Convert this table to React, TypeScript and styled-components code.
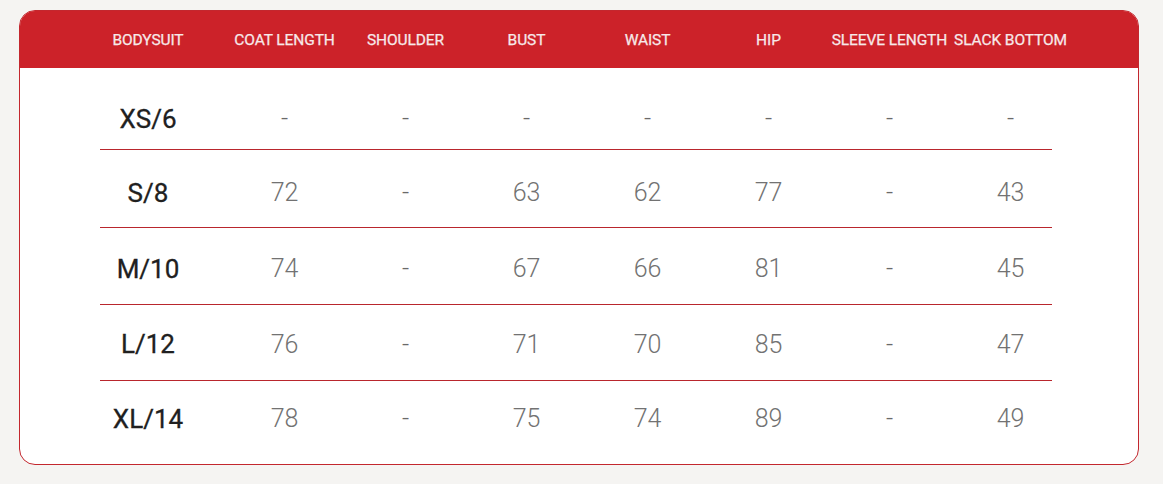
import React from "react";
import styled, { createGlobalStyle } from "styled-components";

const GlobalStyle = createGlobalStyle`
  html, body {
    margin: 0;
    padding: 0;
    background: #f5f4f2;
  }
  body {
    font-family: Roboto, "Liberation Sans", sans-serif;
  }
`;

const Page = styled.div`
  width: 1163px;
  height: 484px;
  padding: 10px 0 0 19px;
  box-sizing: border-box;
`;

const Card = styled.div`
  width: 1120px;
  height: 455px;
  box-sizing: border-box;
  border: 1px solid #c3272e;
  border-radius: 16px;
  background: #fff;
  overflow: hidden;
`;

const Header = styled.div`
  height: 57px;
  background: #cc2229;
  display: flex;
  align-items: center;
  margin-top: -1px;
  margin-left: -1px;
  margin-right: -1px;
  padding-top: 1px;
`;

const Grid = styled.div`
  display: grid;
  grid-template-columns: 124px repeat(7, 121px);
  width: 952px;
  margin-left: 81px;
  align-items: center;
`;

const HeadCell = styled.div`
  color: #f7e9e9;
  font-size: 15.5px;
  font-weight: 400;
  -webkit-text-stroke: 0.25px #f7e9e9;
  text-align: center;
  white-space: nowrap;
  letter-spacing: -0.1px;
  &:first-child {
    padding-right: 28px;
  }
`;

const Row = styled(Grid)<{ $h: number; $pt: number; $pb?: number; $last?: boolean }>`
  height: ${(p) => p.$h}px;
  box-sizing: border-box;
  padding-top: ${(p) => p.$pt}px;
  padding-bottom: ${(p) => p.$pb ?? 0}px;
  margin-left: 80px;
  border-bottom: ${(p) => (p.$last ? "none" : "1px solid #b9262d")};
`;

const SizeCell = styled.div`
  color: #202020;
  font-size: 26px;
  font-weight: 400;
  -webkit-text-stroke: 0.3px #202020;
  text-align: center;
  padding-right: 28px;
`;

const Value = styled.div<{ $dash?: boolean }>`
  color: ${(p) => (p.$dash ? "#6a6a6a" : "#727272")};
  font-size: 25px;
  font-weight: 300;
  text-align: center;
`;

const heads = [
  "BODYSUIT",
  "COAT LENGTH",
  "SHOULDER",
  "BUST",
  "WAIST",
  "HIP",
  "SLEEVE LENGTH",
  "SLACK BOTTOM",
];

const rows = [
  { size: "XS/6", vals: ["-", "-", "-", "-", "-", "-", "-"], h: 82, pt: 20 },
  { size: "S/8", vals: ["72", "-", "63", "62", "77", "-", "43"], h: 78, pt: 8 },
  { size: "M/10", vals: ["74", "-", "67", "66", "81", "-", "45"], h: 77, pt: 5 },
  { size: "L/12", vals: ["76", "-", "71", "70", "85", "-", "47"], h: 76, pt: 3 },
  { size: "XL/14", vals: ["78", "-", "75", "74", "89", "-", "49"], h: 83, pt: 0, pb: 8 },
];

export default function App() {
  return (
    <>
      <GlobalStyle />
      <Page>
        <Card>
          <Header>
            <Grid>
              {heads.map((h) => (
                <HeadCell key={h}>{h}</HeadCell>
              ))}
            </Grid>
          </Header>
          {rows.map((r, i) => (
            <Row key={r.size} $h={r.h} $pt={r.pt} $pb={r.pb} $last={i === rows.length - 1}>
              <SizeCell>{r.size}</SizeCell>
              {r.vals.map((v, j) => (
                <Value key={j} $dash={v === "-"}>
                  {v}
                </Value>
              ))}
            </Row>
          ))}
        </Card>
      </Page>
    </>
  );
}
